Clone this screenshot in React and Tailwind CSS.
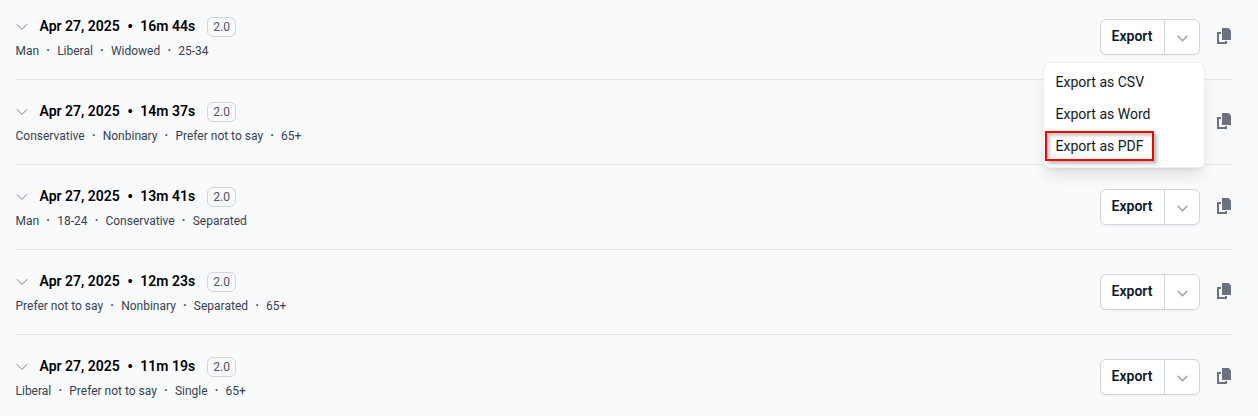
const rows = [
  { time: '16m 44s', tags: ['Man', 'Liberal', 'Widowed', '25-34'], menuOpen: true },
  { time: '14m 37s', tags: ['Conservative', 'Nonbinary', 'Prefer not to say', '65+'], covered: true },
  { time: '13m 41s', tags: ['Man', '18-24', 'Conservative', 'Separated'] },
  { time: '12m 23s', tags: ['Prefer not to say', 'Nonbinary', 'Separated', '65+'] },
  { time: '11m 19s', tags: ['Liberal', 'Prefer not to say', 'Single', '65+'] },
];

function Chevron({ className, strokeWidth }) {
  return (
    <svg viewBox="0 0 12 12" className={className} fill="none" stroke="currentColor" strokeWidth={strokeWidth} strokeLinecap="round" strokeLinejoin="round">
      <path d="M1.2 3.6 6 8.4l4.8-4.8" />
    </svg>
  );
}

function CopyIcon() {
  return (
    <svg viewBox="0 0 14 16" className="h-4 w-[14px] text-gray-500" fill="currentColor">
      <path d="M5 0h6.5L14 2.5V12H5z" />
      <path d="M0 4h4v2H2v8h6v-1h2v3H0z" />
    </svg>
  );
}

function ExportMenu() {
  return (
    <div className="absolute right-[-6px] top-[42px] z-10 h-[106px] w-[162px] rounded-md border border-gray-200/70 bg-white pt-[3px] text-sm leading-5 text-gray-900 shadow-lg">
      <div className="flex h-8 items-center px-[11.5px]">Export as CSV</div>
      <div className="flex h-8 items-center px-[11.5px]">Export as Word</div>
      <div className="flex h-8 items-center px-[11.5px]">Export as PDF</div>
      <div className="absolute left-[1px] top-[68px] h-[30px] w-[109px] border-2 border-[#ff0000] shadow-[3px_3px_3px_rgba(0,0,0,0.25),inset_3px_3px_3px_rgba(0,0,0,0.2)]" />
    </div>
  );
}

function ExportButton({ menuOpen }) {
  return (
    <div className="relative flex h-9 w-[100px] rounded-md border border-gray-300 bg-white shadow-xs">
      <div className="flex w-[64px] items-center justify-center border-r border-gray-300 pr-px pb-[2px] text-sm font-semibold text-gray-900">Export</div>
      <div className="flex flex-1 items-center justify-center">
        <Chevron className="mt-[2px] h-[11px] w-[11px] text-gray-400" strokeWidth={1.6} />
      </div>
      {menuOpen && <ExportMenu />}
    </div>
  );
}

function Row({ time, tags, menuOpen, covered }) {
  return (
    <div className="flex h-[85px] shrink-0 justify-between border-b border-gray-200">
      <div className="pt-[22px]">
        <div className="flex h-5 items-center">
          <Chevron className="h-3 w-3 text-gray-500" strokeWidth={0.9} />
          <div className="ml-[11.5px] flex pb-[2px] text-sm leading-5 font-semibold text-black">
            <span>Apr 27, 2025</span>
            <span className="w-[20.5px] pt-px text-center text-base leading-5 font-bold">•</span>
            <span>{time}</span>
          </div>
          <span className="ml-3 flex h-5 w-[29px] items-center justify-center rounded-md border border-gray-300 text-xs text-gray-600">2.0</span>
        </div>
        <div className="mt-[5px] -ml-[0.5px] flex text-xs leading-[18px] text-gray-700">
          {tags.map((tag, i) => (
            <div key={tag} className="flex">
              {i > 0 && <span className="w-[18px] text-center font-bold">·</span>}
              <span>{tag}</span>
            </div>
          ))}
        </div>
      </div>
      <div className="mt-6 flex h-9 items-center">
        {!covered && <ExportButton menuOpen={menuOpen} />}
        <div className="mr-px mb-[2px] ml-[17px]">
          <CopyIcon />
        </div>
      </div>
    </div>
  );
}

export default function App() {
  return (
    <div className="flex h-[416px] flex-col overflow-hidden bg-[#f9fafc] pr-[26px] pl-4 font-['Roboto',sans-serif]">
      <div className="-mt-[5px] flex flex-col">
        {rows.map((row) => (
          <Row key={row.time} {...row} />
        ))}
      </div>
    </div>
  );
}
